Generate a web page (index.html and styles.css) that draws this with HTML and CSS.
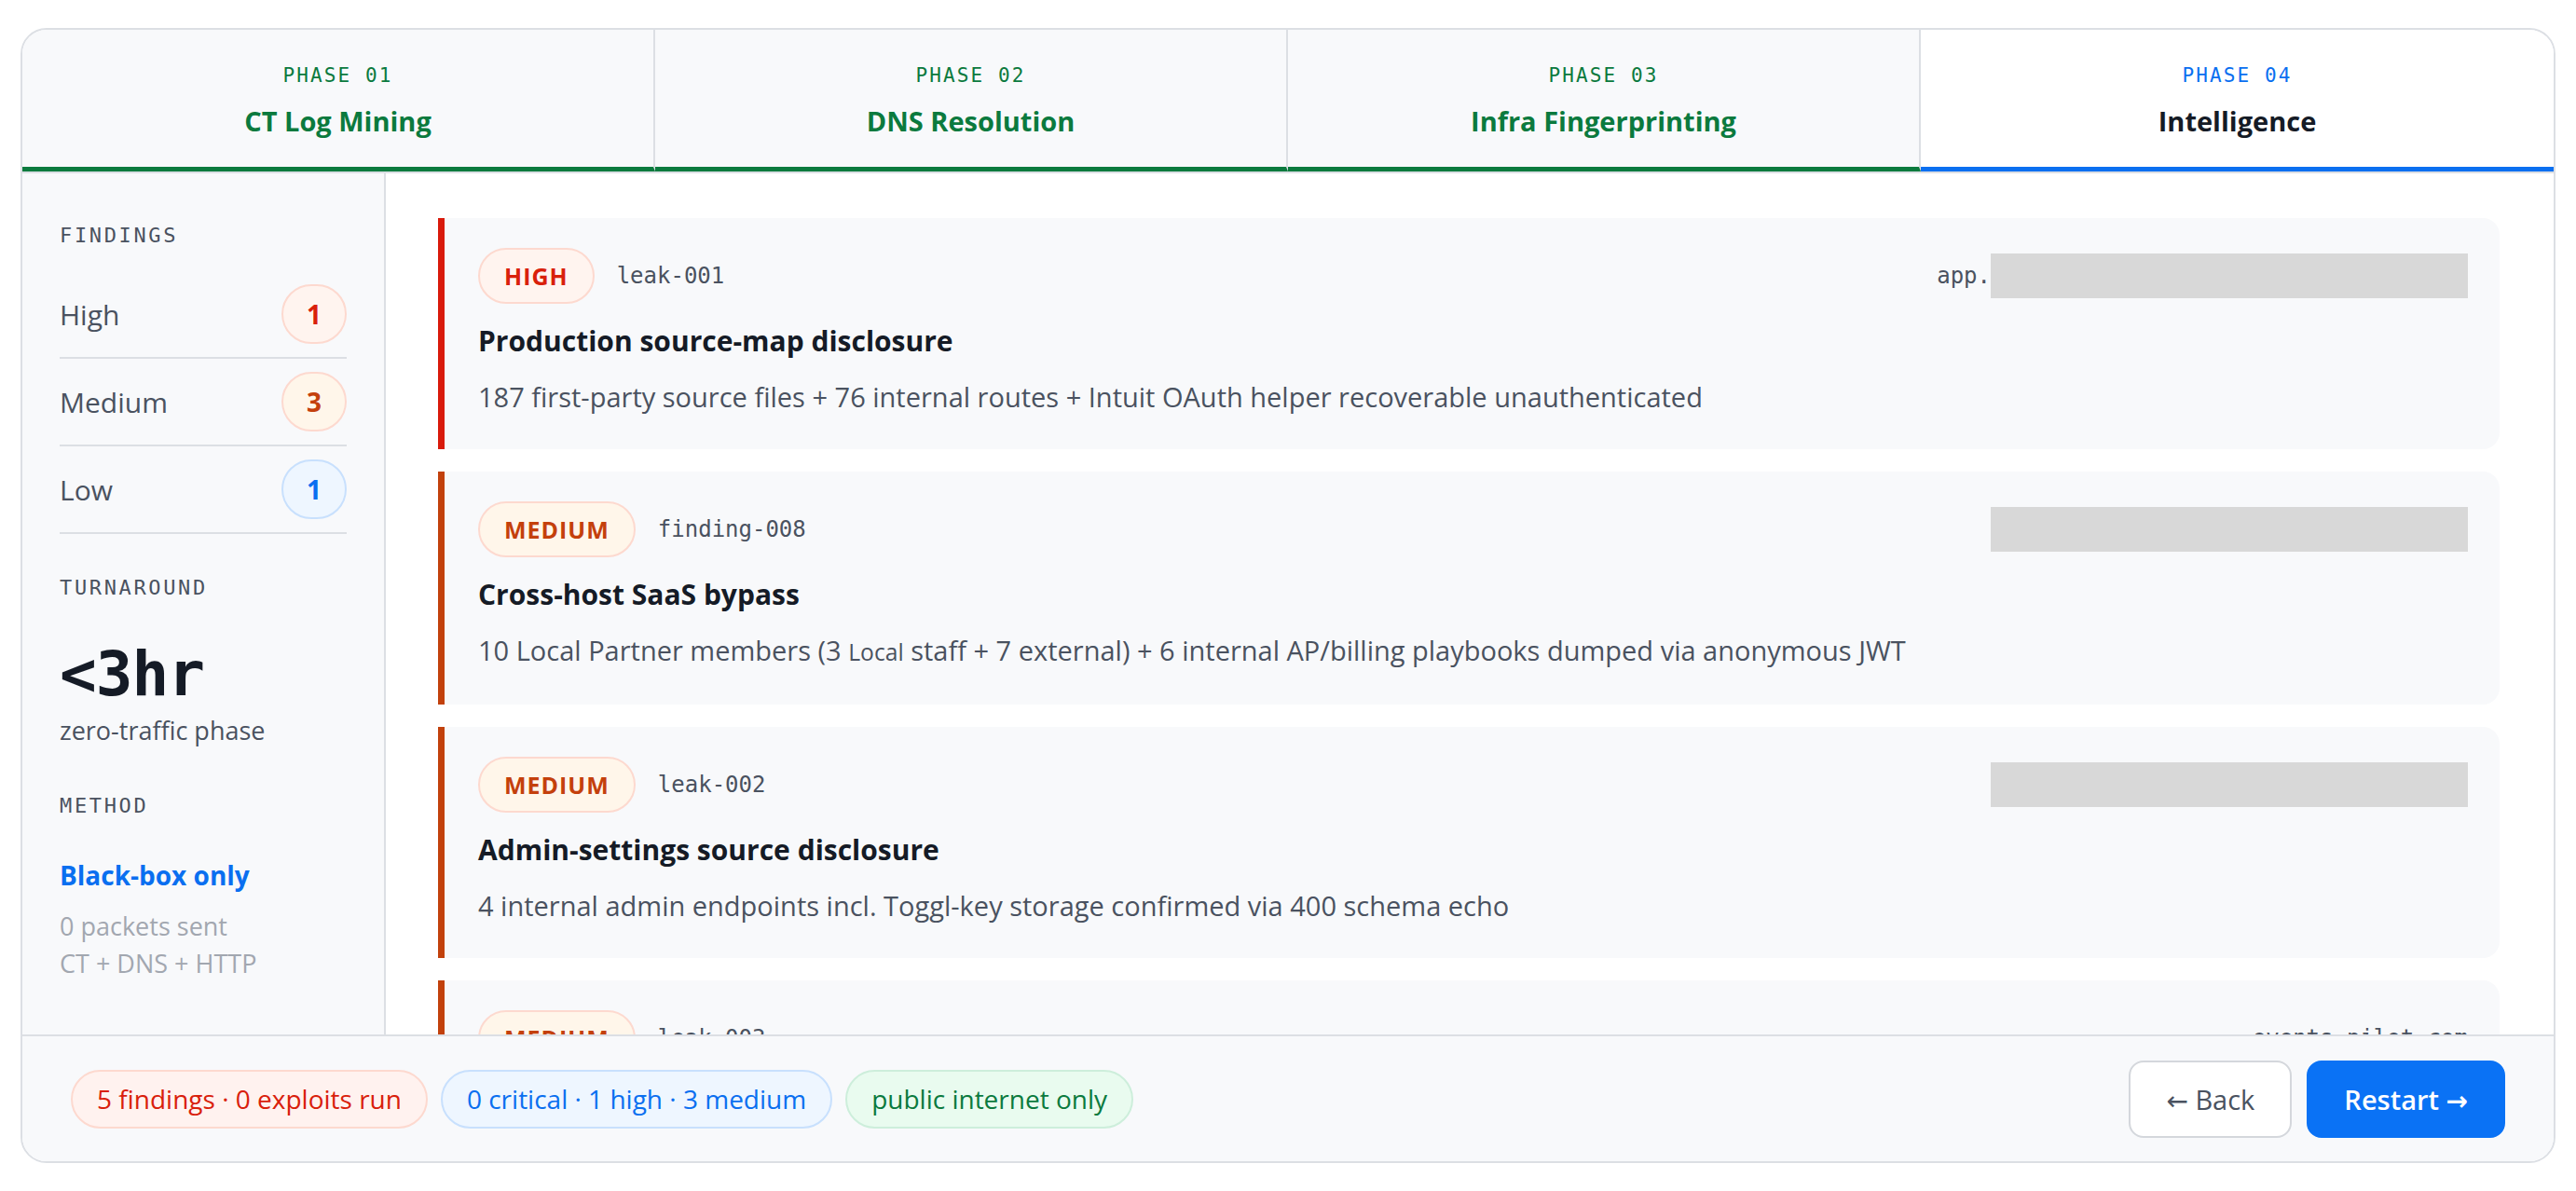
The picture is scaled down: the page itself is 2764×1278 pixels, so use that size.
FILE: index.html
```html
<!DOCTYPE html>
<html lang="en">
<head>
  <meta charset="UTF-8" />
  <meta name="viewport" content="width=device-width, initial-scale=1" />
  <title>Recon — Intelligence</title>
  <link rel="stylesheet" href="styles.css">
</head>
<body>

  <div class="panel">

    <!-- Phase tabs -->
    <nav class="phases">
      <div class="phase done">
        <span class="phase-num">PHASE 01</span>
        <span class="phase-name">CT Log Mining</span>
      </div>
      <div class="phase done">
        <span class="phase-num">PHASE 02</span>
        <span class="phase-name">DNS Resolution</span>
      </div>
      <div class="phase done">
        <span class="phase-num">PHASE 03</span>
        <span class="phase-name">Infra Fingerprinting</span>
      </div>
      <div class="phase current">
        <span class="phase-num">PHASE 04</span>
        <span class="phase-name">Intelligence</span>
      </div>
    </nav>

    <div class="body">

      <aside class="sidebar">
        <div class="side-label">FINDINGS</div>
        <ul class="counts">
          <li><span>High</span><span class="count high">1</span></li>
          <li><span>Medium</span><span class="count medium">3</span></li>
          <li><span>Low</span><span class="count low">1</span></li>
        </ul>

        <div class="side-label turnaround">TURNAROUND</div>
        <div class="big-stat">&lt;3hr</div>
        <div class="stat-note">zero-traffic phase</div>

        <div class="side-label method">METHOD</div>
        <div class="method-name">Black-box only</div>
        <div class="method-note">0 packets sent</div>
        <div class="method-note">CT + DNS + HTTP</div>
      </aside>

      <main class="findings">
        <article class="finding high">
          <div class="finding-head">
            <span class="sev high">HIGH</span>
            <span class="fid">leak-001</span>
            <span class="host">app.<span class="redact"></span></span>
          </div>
          <h3>Production source-map disclosure</h3>
          <p>187 first-party source files + 76 internal routes + Intuit OAuth helper recoverable unauthenticated</p>
        </article>

        <article class="finding medium">
          <div class="finding-head">
            <span class="sev medium">MEDIUM</span>
            <span class="fid">finding-008</span>
            <span class="host"><span class="redact"></span></span>
          </div>
          <h3>Cross-host SaaS bypass</h3>
          <p>10 Local Partner members (3 <span class="small">Local</span> staff + 7 external) + 6 internal AP/billing playbooks dumped via anonymous JWT</p>
        </article>

        <article class="finding medium">
          <div class="finding-head">
            <span class="sev medium">MEDIUM</span>
            <span class="fid">leak-002</span>
            <span class="host"><span class="redact"></span></span>
          </div>
          <h3>Admin-settings source disclosure</h3>
          <p>4 internal admin endpoints incl. Toggl-key storage confirmed via 400 schema echo</p>
        </article>

        <article class="finding medium">
          <div class="finding-head">
            <span class="sev medium">MEDIUM</span>
            <span class="fid">leak-003</span>
            <span class="host">events-pilot.com</span>
          </div>
          <h3>Event pilot exposure</h3>
          <p>Internal event tooling reachable from the public internet</p>
        </article>
      </main>

    </div>

    <footer class="bar">
      <div class="pills">
        <span class="pill red">5 findings · 0 exploits run</span>
        <span class="pill blue">0 critical · 1 high · 3 medium</span>
        <span class="pill green">public internet only</span>
      </div>
      <div class="actions">
        <button class="btn ghost"><span class="arrow">&larr;</span> Back</button>
        <button class="btn primary">Restart <span class="arrow">&rarr;</span></button>
      </div>
    </footer>

  </div>

</body>
</html>
```

FILE: styles.css
```css
* {
  box-sizing: border-box;
}

body {
  margin: 0;
  padding: 30px 22px;
  background-color: #ffffff;
  font-family: 'Open Sans', 'Noto Sans', sans-serif;
  color: #151b26;
  height: 100vh;
}

.panel {
  height: 100%;
  border: 2px solid #dcdfe4;
  border-radius: 28px;
  overflow: hidden;
  display: flex;
  flex-direction: column;
  background-color: #ffffff;
}

/* Phases */
.phases {
  display: grid;
  grid-template-columns: repeat(4, 1fr);
  border-bottom: 2px solid #dcdfe4;
  flex-shrink: 0;
}

.phase {
  display: flex;
  flex-direction: column;
  align-items: center;
  gap: 14px;
  padding: 34px 20px 29px;
  background-color: #f8f9fb;
  border-right: 2px solid #dcdfe4;
  border-bottom: 5px solid #0b7a3e;
}

.phase:last-child {
  border-right: none;
}

.phase-num {
  font-family: 'DejaVu Sans Mono', monospace;
  font-size: 21px;
  line-height: 30px;
  letter-spacing: 0.1em;
  color: #0b7a3e;
}

.phase-name {
  font-size: 29px;
  line-height: 40px;
  font-weight: 700;
  color: #0b7a3e;
}

.phase.current {
  background-color: #ffffff;
  border-bottom-color: #0a6ff0;
}

.phase.current .phase-num {
  color: #0a6ff0;
}

.phase.current .phase-name {
  color: #151b26;
}

/* Body */
.body {
  flex: 1;
  display: flex;
  min-height: 0;
}

.sidebar {
  width: 390px;
  flex-shrink: 0;
  background-color: #f8f9fb;
  border-right: 2px solid #dcdfe4;
  padding: 50px 40px;
}

.side-label {
  font-family: 'DejaVu Sans Mono', monospace;
  font-size: 22px;
  line-height: 34px;
  letter-spacing: 0.12em;
  color: #4a5260;
}

.counts {
  list-style: none;
  margin: 21px 0 0;
  padding: 0;
}

.counts li {
  display: flex;
  justify-content: space-between;
  align-items: center;
  padding: 14px 0;
  border-bottom: 2px solid #dcdfe4;
  font-size: 30px;
  color: #4a5260;
}

.count {
  width: 70px;
  height: 64px;
  border-radius: 999px;
  border: 2px solid;
  display: flex;
  justify-content: center;
  align-items: center;
  font-size: 28px;
  font-weight: 700;
}

.count.high {
  color: #d9200b;
  background-color: #fff4ef;
  border-color: #fdd9cf;
}

.count.medium {
  color: #c4400c;
  background-color: #fff6ea;
  border-color: #fdd9cf;
}

.count.low {
  color: #0a6ff0;
  background-color: #eef6ff;
  border-color: #c8e0fd;
}

.turnaround {
  margin-top: 41px;
}

.big-stat {
  margin-top: 40px;
  font-family: 'DejaVu Sans Mono', monospace;
  font-size: 66px;
  line-height: 72px;
  font-weight: 700;
  letter-spacing: -1px;
  color: #151b26;
}

.stat-note {
  margin-top: 6px;
  font-size: 27px;
  line-height: 36px;
  color: #4a5260;
}

.method {
  margin-top: 46px;
}

.method-name {
  margin-top: 37px;
  font-size: 28px;
  line-height: 40px;
  font-weight: 700;
  color: #0a6ff0;
}

.method-note {
  font-size: 27px;
  line-height: 40px;
  color: #a2a7b0;
}

.method-name + .method-note {
  margin-top: 15px;
}

/* Findings */
.findings {
  flex: 1;
  overflow: hidden;
  padding: 48px 58px 0 56px;
  display: flex;
  flex-direction: column;
  gap: 24px;
}

.finding {
  flex-shrink: 0;
  background-color: #f8f9fb;
  border-left: 7px solid #c2410c;
  border-radius: 0 18px 18px 0;
  padding: 32px 34px 36px 36px;
}

.finding.high {
  border-left-color: #d91a0b;
}

.finding-head {
  display: flex;
  align-items: center;
  gap: 24px;
  height: 60px;
}

.sev {
  height: 60px;
  padding: 0 26px;
  border-radius: 999px;
  border: 2px solid #fdd9cf;
  display: flex;
  align-items: center;
  font-size: 25px;
  font-weight: 700;
  letter-spacing: 0.04em;
}

.sev.high {
  color: #d9200b;
  background-color: #fff4ef;
}

.sev.medium {
  color: #c4400c;
  background-color: #fff6ea;
}

.fid,
.host {
  font-family: 'DejaVu Sans Mono', monospace;
  font-size: 24px;
  color: #4a5260;
}

.host {
  margin-left: auto;
  display: flex;
  align-items: center;
}

.redact {
  display: inline-block;
  width: 512px;
  height: 48px;
  background-color: #d8d8d8;
}

.finding h3 {
  margin: 20px 0 0;
  font-size: 30px;
  line-height: 40px;
  font-weight: 700;
  color: #151b26;
}

.finding p {
  margin: 20px 0 0;
  font-size: 29px;
  line-height: 40px;
  color: #4a5260;
}

.finding p .small {
  font-size: 0.85em;
}

/* Footer */
.bar {
  flex-shrink: 0;
  height: 136px;
  border-top: 2px solid #dcdfe4;
  background-color: #f8f9fb;
  display: flex;
  justify-content: space-between;
  align-items: center;
  padding: 0 52px 0 52px;
}

.pills {
  display: flex;
  gap: 14px;
}

.pill {
  height: 63px;
  padding: 0 26px;
  border-radius: 999px;
  border: 2px solid;
  display: flex;
  align-items: center;
  font-size: 28px;
}

.pill.red {
  color: #d9200b;
  background-color: #fff2ef;
  border-color: #fdd9cf;
}

.pill.blue {
  color: #0a6ff0;
  background-color: #eef6ff;
  border-color: #c8e0fd;
}

.pill.green {
  color: #0b7a3e;
  background-color: #e9fbef;
  border-color: #cdeedb;
}

.actions {
  display: flex;
  gap: 16px;
}

.btn {
  height: 83px;
  padding: 0 38px;
  border-radius: 16px;
  font-family: 'Open Sans', 'Noto Sans', sans-serif;
  font-size: 29px;
  cursor: pointer;
}

.btn .arrow {
  font-family: 'DejaVu Sans', sans-serif;
  font-size: 28px;
}

.btn.ghost {
  background-color: #ffffff;
  border: 2px solid #d4d7dc;
  color: #4a5260;
}

.btn.primary {
  background-color: #0a72f5;
  border: 2px solid #0a72f5;
  color: #ffffff;
  font-weight: 600;
}
```
